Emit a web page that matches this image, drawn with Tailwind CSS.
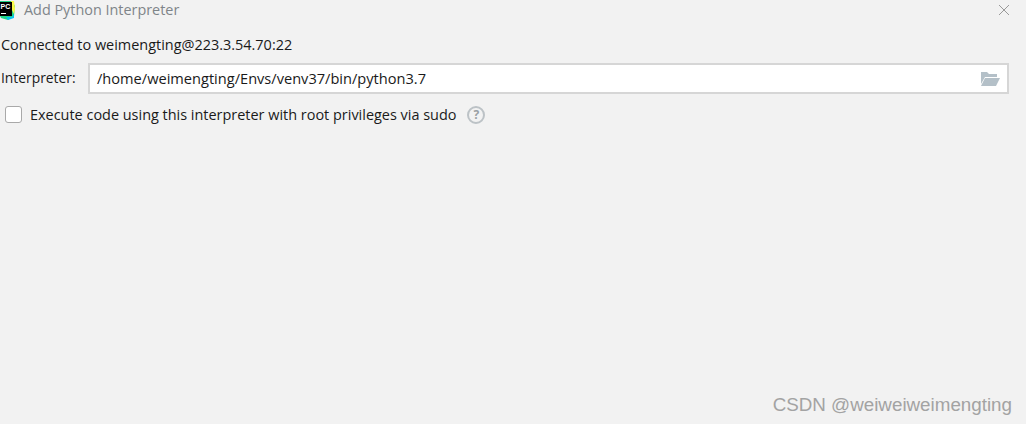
<!DOCTYPE html>
<html lang="en">

<head>
    <meta charset="UTF-8">
    <title>Add Python Interpreter</title>
    <script src="https://cdn.jsdelivr.net/npm/@tailwindcss/browser@4"></script>
</head>

<body class="relative h-[424px] w-[1026px] overflow-hidden bg-[#f2f2f2] font-['Open_Sans','Noto_Sans',sans-serif] text-[14.45px] text-[#1a1a1a]">
    <!-- title bar -->
    <div class="flex h-[20px] items-center">
        <svg class="ml-[-2px] h-[20px] w-[18px] shrink-0" viewBox="0 0 18 20">
            <path d="M2 1H14L17 6L16 16L10 20L3 18L2 16Z" fill="#21d789" />
            <path d="M13 1H16L17 9L16 14L14 10Z" fill="#fcf84a" />
            <path d="M8 17H14L16 14L16 18L10 20Z" fill="#07c3f2" />
            <rect x="2" y="2" width="12" height="14" fill="#000" />
            <text x="2.5" y="9" font-size="7" font-weight="700" fill="#fff" font-family="Liberation Sans">PC</text>
            <rect x="3" y="13" width="5" height="1" fill="#fff" />
        </svg>
        <span class="ml-[8px] text-[14.4px] text-[#7f8589]">Add Python Interpreter</span>
        <svg class="ml-auto mr-[16px] h-[12px] w-[12px]" viewBox="0 0 12 12" stroke="#9a9a9a" fill="none">
            <path d="M1 1L11 11M11 1L1 11" />
        </svg>
    </div>

    <!-- connection -->
    <p class="mt-[15px] ml-[1px] leading-[20px]">Connected to weimengting@223.3.54.70:22</p>

    <!-- interpreter path -->
    <div class="mt-[8px] flex items-center pr-[17px]">
        <label class="ml-[1px] w-[87px] shrink-0 text-[13.85px]">Interpreter:</label>
        <div class="flex h-[31px] flex-1 items-center border-2 border-[#d6d6d6] bg-white pl-[7px] pr-[7px]">
            <span class="text-[14.6px]">/home/weimengting/Envs/venv37/bin/python3.7</span>
            <svg class="ml-auto h-[16px] w-[20px]" viewBox="0 0 20 16" fill="#b4c0c8">
                <path d="M1 1H7L9 3H17V6H5L1 13Z" />
                <path d="M5 7H20L16 15H1Z" />
            </svg>
        </div>
    </div>

    <!-- sudo checkbox -->
    <div class="mt-[10px] flex items-center pl-[5px]">
        <span class="h-[17px] w-[17px] rounded-[3px] border border-[#a9a9a9] bg-white"></span>
        <span class="ml-[8px]">Execute code using this interpreter with root privileges via sudo</span>
        <span class="ml-[11px] flex h-[18px] w-[18px] items-center justify-center rounded-full border-2 border-[#bcc2c6] text-[12px] font-bold text-[#9aa0a4]">?</span>
    </div>

    <!-- watermark -->
    <div class="absolute right-[14px] top-[393px] font-['Liberation_Sans',sans-serif] text-[18.8px] leading-[24px] text-[#a3a3a3]">CSDN @weiweiweimengting</div>
</body>

</html>
